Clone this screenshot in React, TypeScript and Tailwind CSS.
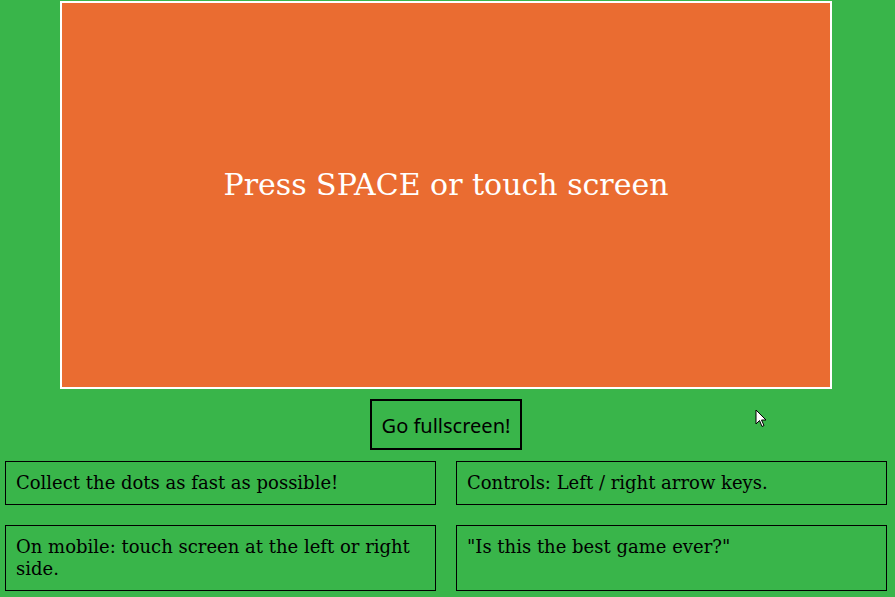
export default function App() {
  const serif = { fontFamily: '"DejaVu Serif", serif' };
  return (
    <div className="relative min-h-[597px] w-full bg-[#39b54a]">
      <div className="w-[892px] pt-px px-[5px] flex flex-col items-center">
        <div
          className="w-[772px] h-[388px] border-2 border-white bg-[#ea6c31] flex items-center justify-center pb-[20px]"
          style={serif}
        >
          <span className="text-white text-[30px] leading-none">Press SPACE or touch screen</span>
        </div>
        <button
          className="mt-[10px] h-[51px] px-[10px] pt-[3px] border-2 border-black text-black text-[20px] leading-none bg-transparent"
          style={{ fontFamily: '"Noto Sans", sans-serif' }}
        >
          Go fullscreen!
        </button>
        <div className="mt-[11px] w-full grid grid-cols-2 gap-[20px]" style={serif}>
          <div className="border border-black px-[10px] py-[10px] text-[18px] leading-[22px] text-black">
            Collect the dots as fast as possible!
          </div>
          <div className="border border-black px-[10px] py-[10px] text-[18px] leading-[22px] text-black">
            Controls: Left / right arrow keys.
          </div>
          <div className="border border-black px-[10px] py-[10px] text-[18px] leading-[22px] text-black">
            On mobile: touch screen at the left or right side.
          </div>
          <div className="border border-black px-[10px] py-[10px] text-[18px] leading-[22px] text-black">
            "Is this the best game ever?"
          </div>
        </div>
      </div>
      <svg className="absolute left-[755px] top-[409px]" width="13" height="20" viewBox="0 0 13 20">
        <path d="M1 1 L1 15 L4.5 11.5 L7 17.5 L9 16.5 L6.5 11 L11 11 Z" fill="white" stroke="black" strokeWidth="1" strokeLinejoin="round" />
      </svg>
    </div>
  );
}
